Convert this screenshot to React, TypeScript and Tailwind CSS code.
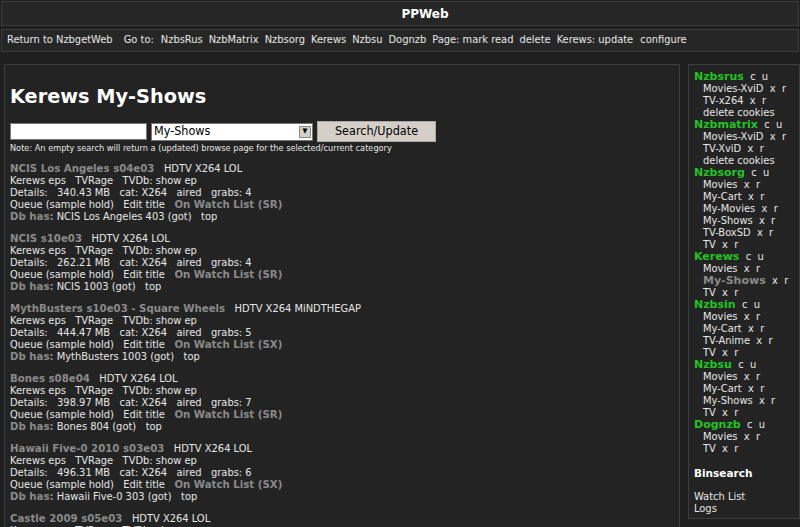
const shows = [
  { title: "NCIS Los Angeles s04e03", rel: "HDTV X264 LOL", size: "340.43 MB", grabs: 4, list: "SR", db: "NCIS Los Angeles 403 (got)" },
  { title: "NCIS s10e03", rel: "HDTV X264 LOL", size: "262.21 MB", grabs: 4, list: "SR", db: "NCIS 1003 (got)" },
  { title: "MythBusters s10e03 - Square Wheels", rel: "HDTV X264 MiNDTHEGAP", size: "444.47 MB", grabs: 5, list: "SX", db: "MythBusters 1003 (got)" },
  { title: "Bones s08e04", rel: "HDTV X264 LOL", size: "398.97 MB", grabs: 7, list: "SR", db: "Bones 804 (got)" },
  { title: "Hawaii Five-0 2010 s03e03", rel: "HDTV X264 LOL", size: "496.31 MB", grabs: 6, list: "SX", db: "Hawaii Five-0 303 (got)" },
  { title: "Castle 2009 s05e03", rel: "HDTV X264 LOL", size: "312.40 MB", grabs: 5, list: "SR", db: "Castle 2009 503 (got)" },
];

const sites = [
  { name: "Nzbsrus", cats: ["Movies-XviD", "TV-x264"], cookies: true },
  { name: "Nzbmatrix", cats: ["Movies-XviD", "TV-XviD"], cookies: true },
  { name: "Nzbsorg", cats: ["Movies", "My-Cart", "My-Movies", "My-Shows", "TV-BoxSD", "TV"] },
  { name: "Kerews", cats: ["Movies", "My-Shows", "TV"], current: "My-Shows" },
  { name: "Nzbsin", cats: ["Movies", "My-Cart", "TV-Anime", "TV"] },
  { name: "Nzbsu", cats: ["Movies", "My-Cart", "My-Shows", "TV"] },
  { name: "Dognzb", cats: ["Movies", "TV"] },
];

const nav = ["NzbsRus", "NzbMatrix", "Nzbsorg", "Kerews", "Nzbsu", "Dognzb"];

// bold labels use the regular-width face, body copy the condensed one
const bold = "font-bold text-[#8a8a8a] text-[10.2px] font-['DejaVu_Sans',sans-serif] [font-stretch:normal]";

function Entry({ s }: { s: (typeof shows)[number] }) {
  return (
    <div className="mb-[10px] whitespace-pre leading-[12px]">
      <div>
        <span className={bold}>{s.title}</span>
        {"   "}
        {s.rel}
      </div>
      <div>{"Kerews eps   TVRage   TVDb: show ep"}</div>
      <div>{`Details:   ${s.size}   cat: X264   aired   grabs: ${s.grabs}`}</div>
      <div>
        {"Queue (sample hold)   Edit title   "}
        <span className={bold}>On Watch List ({s.list})</span>
      </div>
      <div>
        <span className={bold}>Db has:</span> {s.db}
        {"   top"}
      </div>
    </div>
  );
}

export default function App() {
  return (
    <div className="h-[527px] overflow-hidden bg-[#1f1f1f] text-[11px] text-[#e6e6e6] font-['DejaVu_Sans_Condensed','DejaVu_Sans',sans-serif] [font-stretch:condensed]">
      <div className="pt-px px-px">
        <div className="h-[25px] border border-[#3c3c3c] bg-[#262626] flex items-center justify-center pl-[50px] font-bold text-[12px] text-white font-['DejaVu_Sans',sans-serif] [font-stretch:normal]">
          PPWeb
        </div>
        <div className="mt-[3px] h-[23px] border border-[#3c3c3c] bg-[#262626] flex items-center gap-[6px] pl-[5px] whitespace-pre">
          <span className="mr-[5px]">Return to NzbgetWeb</span>
          <span className="mr-px">Go to:</span>
          {nav.map((n) => (
            <span key={n}>{n}</span>
          ))}
          <span>Page: mark read</span>
          <span>delete</span>
          <span>Kerews: update</span>
          <span className="ml-px">configure</span>
        </div>
      </div>

      <div className="mt-[12px] flex gap-[8px] pl-[4px]">
        <div className="w-[676px] h-[470px] border border-[#3c3c3c] bg-[#232323] pl-[5px]">
          <h1 className="mt-[20px] text-[19.3px] font-bold text-white leading-[24px] font-['DejaVu_Sans',sans-serif] [font-stretch:normal]">
            Kerews My-Shows
          </h1>
          <div className="mt-[12px] flex items-center">
            <input className="w-[137px] h-[17px] bg-white border border-[#777] text-black" />
            <div className="ml-[4px] w-[162px] h-[18px] bg-white border border-[#777] text-black text-[12.5px] flex items-center justify-between pl-[2px] pr-px">
              <span>My-Shows</span>
              <span className="w-[12px] h-[12px] bg-[#d4d0c8] border border-[#888] flex items-center justify-center text-[7px]">▼</span>
            </div>
            <button className="ml-[4px] w-[119px] h-[21px] bg-[#d4d0c8] border border-[#aaa] text-black text-[12.5px]">
              Search/Update
            </button>
          </div>
          <div className="text-[8.2px] leading-[12px] font-['DejaVu_Sans',sans-serif] [font-stretch:normal]">
            Note: An empty search will return a (updated) browse page for the selected/current category
          </div>
          <div className="mt-[9px]">
            {shows.map((s) => (
              <Entry key={s.title} s={s} />
            ))}
          </div>
        </div>

        <div className="w-[112px] h-[455px] border border-[#3c3c3c] bg-[#232323] pl-[5px] pt-[6px] leading-[12px] whitespace-pre">
          {sites.map((site) => (
            <div key={site.name}>
              <div>
                <span className="font-bold text-[#22c322] font-['DejaVu_Sans',sans-serif] [font-stretch:normal]">{site.name}</span>
                {"  c  u"}
              </div>
              {site.cats.map((c) => (
                <div key={c} className="pl-[9px]">
                  {site.current === c ? (
                    <span className="font-bold text-[#8a8a8a] font-['DejaVu_Sans',sans-serif] [font-stretch:normal]">{c}</span>
                  ) : (
                    c
                  )}
                  {"  x  r"}
                </div>
              ))}
              {site.cookies && <div className="pl-[9px]">delete cookies</div>}
            </div>
          ))}
          <div className="mt-[12px] font-bold text-white text-[10.5px] font-['DejaVu_Sans',sans-serif] [font-stretch:normal]">Binsearch</div>
          <div className="mt-[12px]">Watch List</div>
          <div>Logs</div>
        </div>
      </div>
    </div>
  );
}
